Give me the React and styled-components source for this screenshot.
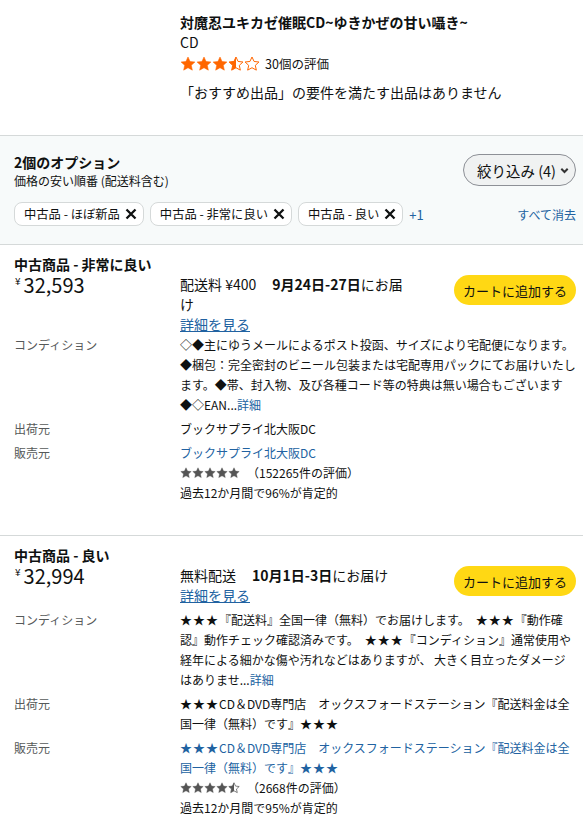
import React from "react";
import styled, { createGlobalStyle } from "styled-components";

const GlobalStyle = createGlobalStyle`
  html, body { margin: 0; padding: 0; background: #fff; }
  body {
    font-family: "Noto Sans CJK JP", "Noto Sans", sans-serif;
    color: #0f1111;
  }
  * { box-sizing: border-box; }
`;

const LINK = "#2162a1";
const STAR_PATH =
  "M12 1.5l3.1 6.7 7.3.8-5.45 5 1.55 7.2L12 17.6l-6.5 3.6 1.55-7.2L1.6 9l7.3-.8z";

let starSeq = 0;
function Star({ kind, color, size }) {
  const id = React.useMemo(() => `half-${++starSeq}`, []);
  return (
    <svg width={size} height={size} viewBox="0 0 24 24" aria-hidden="true">
      {kind === "half" && (
        <defs>
          <clipPath id={id}>
            <rect x="0" y="0" width="12" height="24" />
          </clipPath>
        </defs>
      )}
      <path
        d={STAR_PATH}
        fill={kind === "full" ? color : "none"}
        stroke={color}
        strokeWidth={kind === "full" ? 0.8 : 1.5}
        strokeLinejoin="round"
      />
      {kind === "half" && (
        <path d={STAR_PATH} fill={color} clipPath={`url(#${id})`} />
      )}
    </svg>
  );
}

function StarRow({ kinds, color, size, gap }) {
  return (
    <Stars $gap={gap}>
      {kinds.map((k, i) => (
        <Star key={i} kind={k} color={color} size={size} />
      ))}
    </Stars>
  );
}

const Page = styled.div`
  width: 583px;
`;

/* ---------- product header ---------- */
const Header = styled.header`
  padding: 12px 7px 32px 180px;
  border-bottom: 1px solid #d5d9d9;
`;
const Title = styled.h1`
  margin: 0;
  font-size: 14px;
  font-weight: 700;
  line-height: 20px;
`;
const Format = styled.div`
  font-size: 14px;
  line-height: 20px;
`;
const RatingRow = styled.div`
  display: flex;
  align-items: center;
  gap: 5px;
  height: 22px;
  margin-top: 1px;
`;
const Stars = styled.span`
  display: inline-flex;
  align-items: center;
  gap: ${(p) => p.$gap}px;
`;
const RatingCount = styled.span`
  font-size: 12.5px;
  line-height: 20px;
`;
const Notice = styled.p`
  margin: 6px 0 0;
  font-size: 14px;
  line-height: 22px;
`;

/* ---------- filter bar ---------- */
const FilterBar = styled.section`
  background: #f7fafa;
  padding: 16px 7px 18px 14px;
  border-bottom: 1px solid #d5d9d9;
`;
const FilterTop = styled.div`
  display: flex;
  justify-content: space-between;
  align-items: flex-start;
`;
const OptionCount = styled.div`
  font-size: 14px;
  font-weight: 700;
  line-height: 20px;
`;
const SortNote = styled.div`
  font-size: 12px;
  line-height: 18px;
`;
const FilterButton = styled.button`
  margin-top: 2px;
  height: 32px;
  padding: 0 5px 0 13px;
  display: inline-flex;
  align-items: center;
  gap: 3px;
  background: #f0f2f2;
  border: 1px solid #8d9096;
  border-radius: 16px;
  font-family: inherit;
  font-size: 14.5px;
  color: #0f1111;
`;
const ChipRow = styled.div`
  display: flex;
  align-items: center;
  gap: 6px;
  margin-top: 12px;
`;
const Chip = styled.span`
  display: inline-flex;
  align-items: center;
  gap: 4px;
  height: 24px;
  padding: 0 5px 0 9px;
  background: #fff;
  border: 1px solid #d5d9d9;
  border-radius: 8px;
  font-size: 12.3px;
  line-height: 1;
`;
const MoreCount = styled.span`
  font-size: 13px;
  color: ${LINK};
`;
const ClearAll = styled.a`
  margin-left: auto;
  font-size: 12px;
  color: ${LINK};
  text-decoration: none;
`;

/* ---------- offers ---------- */
const Offer = styled.section`
  padding: 9px 7px 32px 14px;
  border-bottom: 1px solid #d5d9d9;
  &:last-child { border-bottom: none; }
`;
const OfferTitle = styled.h2`
  margin: 0;
  font-size: 14px;
  font-weight: 700;
  line-height: 20px;
`;
const PriceRow = styled.div`
  display: grid;
  grid-template-columns: 166px 1fr;
`;
const Price = styled.div`
  font-size: 20px;
  line-height: 22px;
  display: flex;
  align-items: flex-start;
  padding-left: 1px;
`;
const Yen = styled.span`
  font-size: 10px;
  line-height: 14px;
  margin-right: 3px;
`;
const BuyBox = styled.div`
  display: flex;
  justify-content: space-between;
  align-items: flex-start;
`;
const Delivery = styled.div`
  width: 228px;
  font-size: 14px;
  line-height: 20px;
  b { font-weight: 700; margin-left: 2px; }
`;
const DetailLink = styled.a`
  display: block;
  color: ${LINK};
  text-decoration: underline;
`;
const CartWrap = styled.div`
  padding: 1px 0 13px;
`;
const CartButton = styled.button`
  height: 30px;
  padding: 0 9px;
  background: #ffd814;
  border: none;
  border-radius: 15px;
  font-family: inherit;
  font-size: 13px;
  color: #0f1111;
  white-space: nowrap;
`;
const Details = styled.dl`
  margin: 1px 0 0;
  display: grid;
  grid-template-columns: 166px 1fr;
  row-gap: 4px;
  font-size: 12px;
  line-height: 20px;
`;
const Label = styled.dt`
  color: #565959;
  margin: 0;
`;
const Value = styled.dd`
  margin: 0;
  color: #0f1111;
`;
const InlineLink = styled.a`
  color: ${LINK};
  text-decoration: none;
`;
const Mark = styled.span`
  letter-spacing: 1px;
`;
const SellerRating = styled.div`
  display: flex;
  align-items: center;
  gap: 7px;
  color: #0f1111;
`;

function withMarks(text) {
  return text
    .split(/(★+)/)
    .map((part, i) =>
      part.startsWith("★") ? <Mark key={i}>{part}</Mark> : part
    );
}

function CloseIcon() {
  return (
    <svg width="14" height="14" viewBox="0 0 14 14" aria-hidden="true">
      <path d="M2.5 2.5L11.5 11.5M11.5 2.5L2.5 11.5" stroke="#0f1111" strokeWidth="2.3" />
    </svg>
  );
}
function Chevron() {
  return (
    <svg width="11" height="11" viewBox="0 0 11 11" aria-hidden="true">
      <path d="M2.3 3.8L5.5 7L8.7 3.8" fill="none" stroke="#333" strokeWidth="2" />
    </svg>
  );
}

const offers = [
  {
    title: "中古商品 - 非常に良い",
    price: "32,593",
    shipping: "配送料 ¥400\u3000",
    date: "9月24日-27日",
    condition:
      "◇◆主にゆうメールによるポスト投函、サイズにより宅配便になります。◆梱包：完全密封のビニール包装または宅配専用パックにてお届けいたします。◆帯、封入物、及び各種コード等の特典は無い場合もございます◆◇EAN...",
    shipper: "ブックサプライ北大阪DC",
    seller: "ブックサプライ北大阪DC",
    stars: ["full", "full", "full", "full", "full"],
    count: "（152265件の評価）",
    positive: "過去12か月間で96%が肯定的",
  },
  {
    title: "中古商品 - 良い",
    price: "32,994",
    shipping: "無料配送\u3000",
    date: "10月1日-3日",
    condition:
      "★★★『配送料』全国一律（無料）でお届けします。\u3000★★★『動作確認』動作チェック確認済みです。\u3000★★★『コンディション』通常使用や経年による細かな傷や汚れなどはありますが、 大きく目立ったダメージはありませ...",
    shipper:
      "★★★CD＆DVD専門店　オックスフォードステーション『配送料金は全国一律（無料）です』★★★",
    seller:
      "★★★CD＆DVD専門店　オックスフォードステーション『配送料金は全国一律（無料）です』★★★",
    stars: ["full", "full", "full", "full", "half"],
    count: "（2668件の評価）",
    positive: "過去12か月間で95%が肯定的",
  },
];

export default function App() {
  return (
    <Page>
      <GlobalStyle />
      <Header>
        <Title>対魔忍ユキカゼ催眠CD~ゆきかぜの甘い囁き~</Title>
        <Format>CD</Format>
        <RatingRow>
          <StarRow
            kinds={["full", "full", "full", "half", "empty"]}
            color="#ff6600"
            size={16}
            gap={0}
          />
          <RatingCount>30個の評価</RatingCount>
        </RatingRow>
        <Notice>「おすすめ出品」の要件を満たす出品はありません</Notice>
      </Header>

      <FilterBar>
        <FilterTop>
          <div>
            <OptionCount>2個のオプション</OptionCount>
            <SortNote>価格の安い順番 (配送料含む)</SortNote>
          </div>
          <FilterButton>
            絞り込み (4)
            <Chevron />
          </FilterButton>
        </FilterTop>
        <ChipRow>
          <Chip>
            中古品 - ほぼ新品
            <CloseIcon />
          </Chip>
          <Chip>
            中古品 - 非常に良い
            <CloseIcon />
          </Chip>
          <Chip>
            中古品 - 良い
            <CloseIcon />
          </Chip>
          <MoreCount>+1</MoreCount>
          <ClearAll>すべて消去</ClearAll>
        </ChipRow>
      </FilterBar>

      {offers.map((o) => (
        <Offer key={o.price}>
          <OfferTitle>{o.title}</OfferTitle>
          <PriceRow>
            <Price>
              <Yen>¥</Yen>
              {o.price}
            </Price>
            <BuyBox>
              <Delivery>
                {o.shipping}
                <b>{o.date}</b>にお届け
                <DetailLink>詳細を見る</DetailLink>
              </Delivery>
              <CartWrap>
                <CartButton>カートに追加する</CartButton>
              </CartWrap>
            </BuyBox>
          </PriceRow>
          <Details>
            <Label>コンディション</Label>
            <Value>
              {withMarks(o.condition)}
              <InlineLink>詳細</InlineLink>
            </Value>
            <Label>出荷元</Label>
            <Value>{withMarks(o.shipper)}</Value>
            <Label>販売元</Label>
            <Value>
              <InlineLink>{withMarks(o.seller)}</InlineLink>
              <SellerRating>
                <StarRow kinds={o.stars} color="#555555" size={12} gap={0} />
                <span>{o.count}</span>
              </SellerRating>
              <div>{o.positive}</div>
            </Value>
          </Details>
        </Offer>
      ))}
    </Page>
  );
}
